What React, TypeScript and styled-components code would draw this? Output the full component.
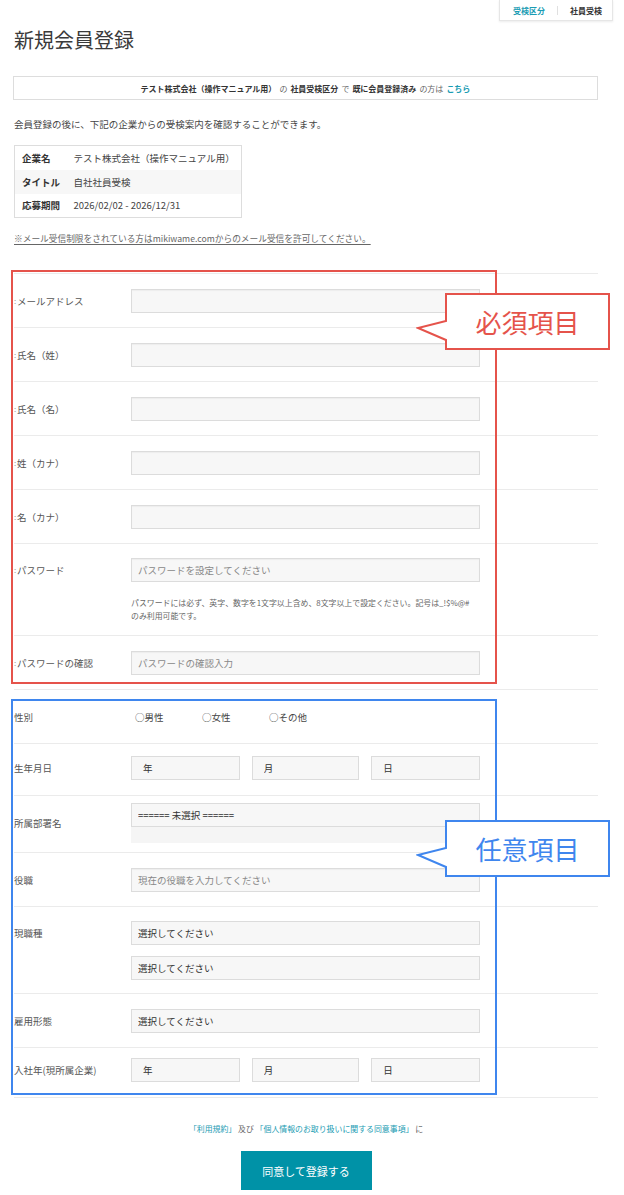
import styled, { createGlobalStyle } from "styled-components";

const GlobalStyle = createGlobalStyle`
  body {
    margin: 0;
    background: #fff;
    font-family: "Noto Sans CJK JP", "Noto Sans", sans-serif;
    color: #333;
  }
  * { box-sizing: border-box; }
`;

const Page = styled.div`
  width: 624px;
  padding: 0 26px 0 14px;
`;

const TopBar = styled.div`
  display: flex;
  justify-content: flex-end;
  margin-right: -15px;
`;

const ExamType = styled.div`
  display: flex;
  align-items: center;
  height: 21px;
  padding: 0 10px 0 13px;
  border: 1px solid #e6e6e6;
  border-top: none;
  box-shadow: 0 1px 2px rgba(0, 0, 0, 0.08);
  font-size: 8px;
  font-weight: 700;
`;

const ExamKey = styled.span`
  color: #1b9cb3;
`;

const Divider = styled.span`
  width: 1px;
  height: 9px;
  background: #e0e0e0;
  margin: 0 12px;
`;

const Title = styled.h1`
  margin: 5px 0 0;
  font-size: 20px;
  font-weight: 400;
  line-height: 28px;
  color: #3a3a3a;
`;

const Notice = styled.div`
  margin: 22px 0 0 -1px;
  height: 24px;
  border: 1px solid #ddd;
  display: flex;
  align-items: center;
  justify-content: center;
  gap: 3px;
  font-size: 8px;
  color: #666;
`;

const Strong = styled.b`
  color: #333;
`;

const Link = styled.span<{ $bold?: boolean }>`
  color: #1b9cb3;
  font-weight: ${(p) => (p.$bold ? 700 : 400)};
`;

const Intro = styled.p`
  margin: 16px 0 0;
  font-size: 9.5px;
  line-height: 16px;
  color: #444;
`;

const InfoTable = styled.table`
  margin-top: 13px;
  width: 228px;
  border: 1px solid #ddd;
  border-collapse: collapse;
  font-size: 9.5px;
  th,
  td {
    height: 24px;
    padding: 0;
    text-align: left;
  }
  th {
    width: 59px;
    padding-left: 7px;
    font-weight: 700;
    color: #333;
  }
  td {
    color: #444;
  }
  tr:nth-child(2) {
    background: #f7f7f7;
  }
`;

const MailNote = styled.p`
  margin: 14px 0 0;
  font-size: 8.7px;
  line-height: 14px;
  color: #666;
  text-decoration: underline;
  text-underline-offset: 2px;
`;

const Form = styled.div`
  margin-top: 27px;
  border-top: 1px solid #ebebeb;
`;

const Group = styled.div`
  position: relative;
`;

const Frame = styled.div<{ $color: string; $top: number; $height: number }>`
  position: absolute;
  left: -3px;
  top: ${(p) => p.$top}px;
  width: 486px;
  height: ${(p) => p.$height}px;
  border: 2px solid ${(p) => p.$color};
  pointer-events: none;
  z-index: 2;
`;

const CalloutWrap = styled.div<{ $top: number }>`
  position: absolute;
  left: 402px;
  top: ${(p) => p.$top}px;
  width: 195px;
  height: 58px;
  z-index: 3;
  svg {
    position: absolute;
    inset: 0;
  }
`;

const CalloutText = styled.span<{ $color: string }>`
  position: absolute;
  left: 30px;
  top: 1px;
  width: 163px;
  height: 55px;
  display: flex;
  align-items: center;
  justify-content: center;
  font-size: 26px;
  color: ${(p) => p.$color};
`;

const Row = styled.div<{ $pt?: number; $pb?: number }>`
  display: grid;
  grid-template-columns: 117px 349px;
  padding: ${(p) => p.$pt ?? 15}px 0 ${(p) => p.$pb ?? 14}px;
  border-bottom: 1px solid #ebebeb;
`;

const Label = styled.div<{ $center?: boolean }>`
  font-size: 9.5px;
  line-height: 24px;
  color: #555;
  align-self: ${(p) => (p.$center ? "center" : "start")};
`;

const Req = styled.span`
  display: inline-block;
  width: 3px;
  font-size: 8px;
  color: #999;
  overflow: hidden;
  vertical-align: top;
`;

const Fields = styled.div<{ $gap?: number }>`
  display: flex;
  flex-direction: column;
  gap: ${(p) => p.$gap ?? 0}px;
`;

const TextInput = styled.input`
  width: 349px;
  height: 24px;
  margin: 0;
  padding: 0 6px;
  border: 1px solid #dcdcdc;
  border-radius: 0;
  background: #f7f7f7;
  box-shadow: inset 0 1px 1px rgba(0, 0, 0, 0.04);
  font: inherit;
  font-size: 9.5px;
  color: #333;
  outline: none;
  &::placeholder {
    color: #888;
  }
`;

const Select = styled.select<{ $w?: number; $pl?: number }>`
  appearance: none;
  width: ${(p) => p.$w ?? 349}px;
  height: 24px;
  margin: 0;
  padding: 0 0 0 ${(p) => p.$pl ?? 6}px;
  border: 1px solid #dcdcdc;
  border-radius: 0;
  background: #f7f7f7;
  font: inherit;
  font-size: 9.5px;
  color: #333;
  outline: none;
`;

const SelectTail = styled.div`
  width: 349px;
  height: 16px;
  background: #f5f5f5;
`;

const DateFields = styled.div`
  display: flex;
  gap: 12px;
`;

const Help = styled.p`
  margin: 14px 0 0;
  font-size: 7.9px;
  line-height: 13px;
  color: #666;
  white-space: nowrap;
`;

const Radios = styled.div`
  display: flex;
  padding-left: 4px;
  font-size: 9.5px;
  line-height: 24px;
  color: #444;
`;

const Radio = styled.label`
  width: 67px;
`;

const Consent = styled.p`
  margin: 25px 0 0;
  text-align: center;
  font-size: 7.9px;
  line-height: 12px;
  color: #666;
`;

const SubmitRow = styled.div`
  display: flex;
  justify-content: center;
  padding: 16px 0 5px;
`;

const Submit = styled.button`
  width: 131px;
  height: 39px;
  border: none;
  border-radius: 0;
  background: #0092a7;
  color: #fff;
  font: inherit;
  font-size: 11px;
`;

function Callout({ color, text, top }: { color: string; text: string; top: number }) {
  return (
    <CalloutWrap $top={top}>
      <svg width="195" height="58" viewBox="0 0 195 58">
        <path
          d="M30 1 H193 V56 H30 V47 L2 35 L30 28 Z"
          fill="#fff"
          stroke={color}
          strokeWidth="2"
          strokeLinejoin="miter"
        />
      </svg>
      <CalloutText $color={color}>{text}</CalloutText>
    </CalloutWrap>
  );
}

const RED = "#e5534b";
const BLUE = "#3f86ee";

export default function App() {
  return (
    <>
      <GlobalStyle />
      <Page>
        <TopBar>
          <ExamType>
            <ExamKey>受検区分</ExamKey>
            <Divider />
            <span>社員受検</span>
          </ExamType>
        </TopBar>
        <Title>新規会員登録</Title>
        <Notice>
          <Strong>テスト株式会社（操作マニュアル用）</Strong>
          <span>の</span>
          <Strong>社員受検区分</Strong>
          <span>で</span>
          <Strong>既に会員登録済み</Strong>
          <span>の方は</span>
          <Link $bold>こちら</Link>
        </Notice>
        <Intro>会員登録の後に、下記の企業からの受検案内を確認することができます。</Intro>
        <InfoTable>
          <tbody>
            <tr>
              <th>企業名</th>
              <td>テスト株式会社（操作マニュアル用）</td>
            </tr>
            <tr>
              <th>タイトル</th>
              <td>自社社員受検</td>
            </tr>
            <tr>
              <th>応募期間</th>
              <td>2026/02/02 - 2026/12/31</td>
            </tr>
          </tbody>
        </InfoTable>
        <MailNote>※メール受信制限をされている方はmikiwame.comからのメール受信を許可してください。</MailNote>

        <Form>
          <Group>
            <Frame $color={RED} $top={-4} $height={414} />
            <Callout color={RED} text="必須項目" top={19} />
            <Row>
              <Label><Req>:</Req>メールアドレス</Label>
              <TextInput />
            </Row>
            <Row>
              <Label><Req>:</Req>氏名（姓）</Label>
              <TextInput />
            </Row>
            <Row>
              <Label><Req>:</Req>氏名（名）</Label>
              <TextInput />
            </Row>
            <Row>
              <Label><Req>:</Req>姓（カナ）</Label>
              <TextInput />
            </Row>
            <Row>
              <Label><Req>:</Req>名（カナ）</Label>
              <TextInput />
            </Row>
            <Row $pt={14} $pb={13}>
              <Label><Req>:</Req>パスワード</Label>
              <Fields>
                <TextInput type="text" placeholder="パスワードを設定してください" />
                <Help>
                  パスワードには必ず、英字、数字を1文字以上含め、8文字以上で設定ください。記号は_!$%@#
                  <br />
                  のみ利用可能です。
                </Help>
              </Fields>
            </Row>
            <Row>
              <Label><Req>:</Req>パスワードの確認</Label>
              <TextInput placeholder="パスワードの確認入力" />
            </Row>
          </Group>

          <Group>
            <Frame $color={BLUE} $top={9} $height={396} />
            <Callout color={BLUE} text="任意項目" top={130} />
            <Row>
              <Label>性別</Label>
              <Radios>
                <Radio>○男性</Radio>
                <Radio>○女性</Radio>
                <Radio>○その他</Radio>
              </Radios>
            </Row>
            <Row $pt={12} $pb={15}>
              <Label>生年月日</Label>
              <DateFields>
                <Select $w={109} $pl={11}><option>年</option></Select>
                <Select $w={108} $pl={11}><option>月</option></Select>
                <Select $w={109} $pl={11}><option>日</option></Select>
              </DateFields>
            </Row>
            <Row $pt={7} $pb={9}>
              <Label $center>所属部署名</Label>
              <Fields>
                <Select><option>====== 未選択 ======</option></Select>
                <SelectTail />
              </Fields>
            </Row>
            <Row>
              <Label>役職</Label>
              <TextInput placeholder="現在の役職を入力してください" />
            </Row>
            <Row $pt={14} $pb={13}>
              <Label>現職種</Label>
              <Fields $gap={11}>
                <Select><option>選択してください</option></Select>
                <Select><option>選択してください</option></Select>
              </Fields>
            </Row>
            <Row>
              <Label>雇用形態</Label>
              <Select><option>選択してください</option></Select>
            </Row>
            <Row $pt={10} $pb={15}>
              <Label>入社年(現所属企業)</Label>
              <DateFields>
                <Select $w={109} $pl={11}><option>年</option></Select>
                <Select $w={108} $pl={11}><option>月</option></Select>
                <Select $w={109} $pl={11}><option>日</option></Select>
              </DateFields>
            </Row>
          </Group>
        </Form>

        <Consent>
          <Link>「利用規約」</Link> 及び <Link>「個人情報のお取り扱いに関する同意事項」</Link> に
        </Consent>
        <SubmitRow>
          <Submit type="button">同意して登録する</Submit>
        </SubmitRow>
      </Page>
    </>
  );
}
